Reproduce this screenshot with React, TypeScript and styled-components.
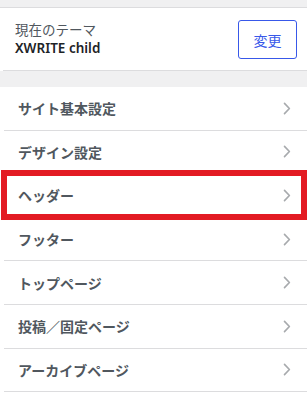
import {FC} from "react";
import styled, {createGlobalStyle} from "styled-components";

const GlobalStyle = createGlobalStyle`
  html, body {
    margin: 0;
    padding: 0;
    background: #fff;
  }
  body {
    font-family: "Noto Sans", "Noto Sans CJK JP", sans-serif;
    -webkit-font-smoothing: antialiased;
  }
`;

const menu = [
    'サイト基本設定',
    'デザイン設定',
    'ヘッダー',
    'フッター',
    'トップページ',
    '投稿／固定ページ',
    'アーカイブページ',
];

const Chevron: FC = () => (
    <svg width="8" height="13" viewBox="0 0 8 13" fill="none">
        <path d="M1.5 1.4L6.4 6.5L1.5 11.6" stroke="#a7aaad" strokeWidth="1.6" strokeLinecap="round" strokeLinejoin="round"/>
    </svg>
);

interface ItemProps {
    title: string;
    marked?: boolean;
}

const MenuItem: FC<ItemProps> = (props: ItemProps) => {
    return (
        <Item $marked={props.marked}>
            <span className={'label'}>{props.title}</span>
            <Chevron/>
        </Item>
    )
}

export default function App() {
    return (
        <Panel>
            <GlobalStyle/>
            <TopBand/>
            <ThemeBox>
                <div>
                    <div className={'caption'}>現在のテーマ</div>
                    <div className={'name'}>XWRITE child</div>
                </div>
                <ChangeButton>変更</ChangeButton>
            </ThemeBox>
            <Gap/>
            <MenuList>
                {menu.map((m) => (
                    <MenuItem key={m} title={m} marked={m === 'ヘッダー'}/>
                ))}
            </MenuList>
        </Panel>
    )
}

const Panel = styled.div`
  width: 307px;
  height: 405px;
  overflow: hidden;
  background: #fff;
`;

const TopBand = styled.div`
  height: 7px;
  background: #f0f0f1;
  border-bottom: 1px solid #dcdcde;
`;

const ThemeBox = styled.div`
  display: flex;
  align-items: center;
  justify-content: space-between;
  height: 63px;
  margin-left: 3px;
  padding: 0 10px 0 12px;
  border-bottom: 1px solid #dcdcde;
  box-sizing: border-box;

  .caption {
    font-size: 13.5px;
    line-height: 18px;
    color: #50575e;
  }

  .name {
    font-size: 13.5px;
    line-height: 18px;
    font-weight: 600;
    color: #1d2327;
  }
`;

const ChangeButton = styled.button`
  width: 59px;
  height: 39px;
  box-sizing: border-box;
  border: 1px solid #3858e9;
  border-radius: 3px;
  background: #fff;
  color: #3858e9;
  font-family: "Noto Sans CJK JP", sans-serif;
  font-size: 14px;
  padding: 0;
  margin-top: 1px;
`;

const Gap = styled.div`
  height: 16px;
  background: #f0f0f1;
`;

const MenuList = styled.div`
  display: flex;
  flex-direction: column;
  margin-left: 4px;
`;

const Item = styled.div<{ $marked?: boolean }>`
  position: relative;
  display: flex;
  align-items: center;
  justify-content: space-between;
  height: 43.6px;
  box-sizing: border-box;
  padding: 0 16px 0 14px;
  border-bottom: 1px solid #dcdcde;

  .label {
    font-family: "Noto Sans CJK JP", sans-serif;
    font-size: 14px;
    font-weight: 700;
    color: #50575e;
  }

  &::after {
    content: '';
    display: ${p => p.$marked ? 'block' : 'none'};
    position: absolute;
    top: -4px;
    bottom: -3px;
    left: -3px;
    right: 0;
    border: 6px solid #e31b23;
    pointer-events: none;
  }
`;
